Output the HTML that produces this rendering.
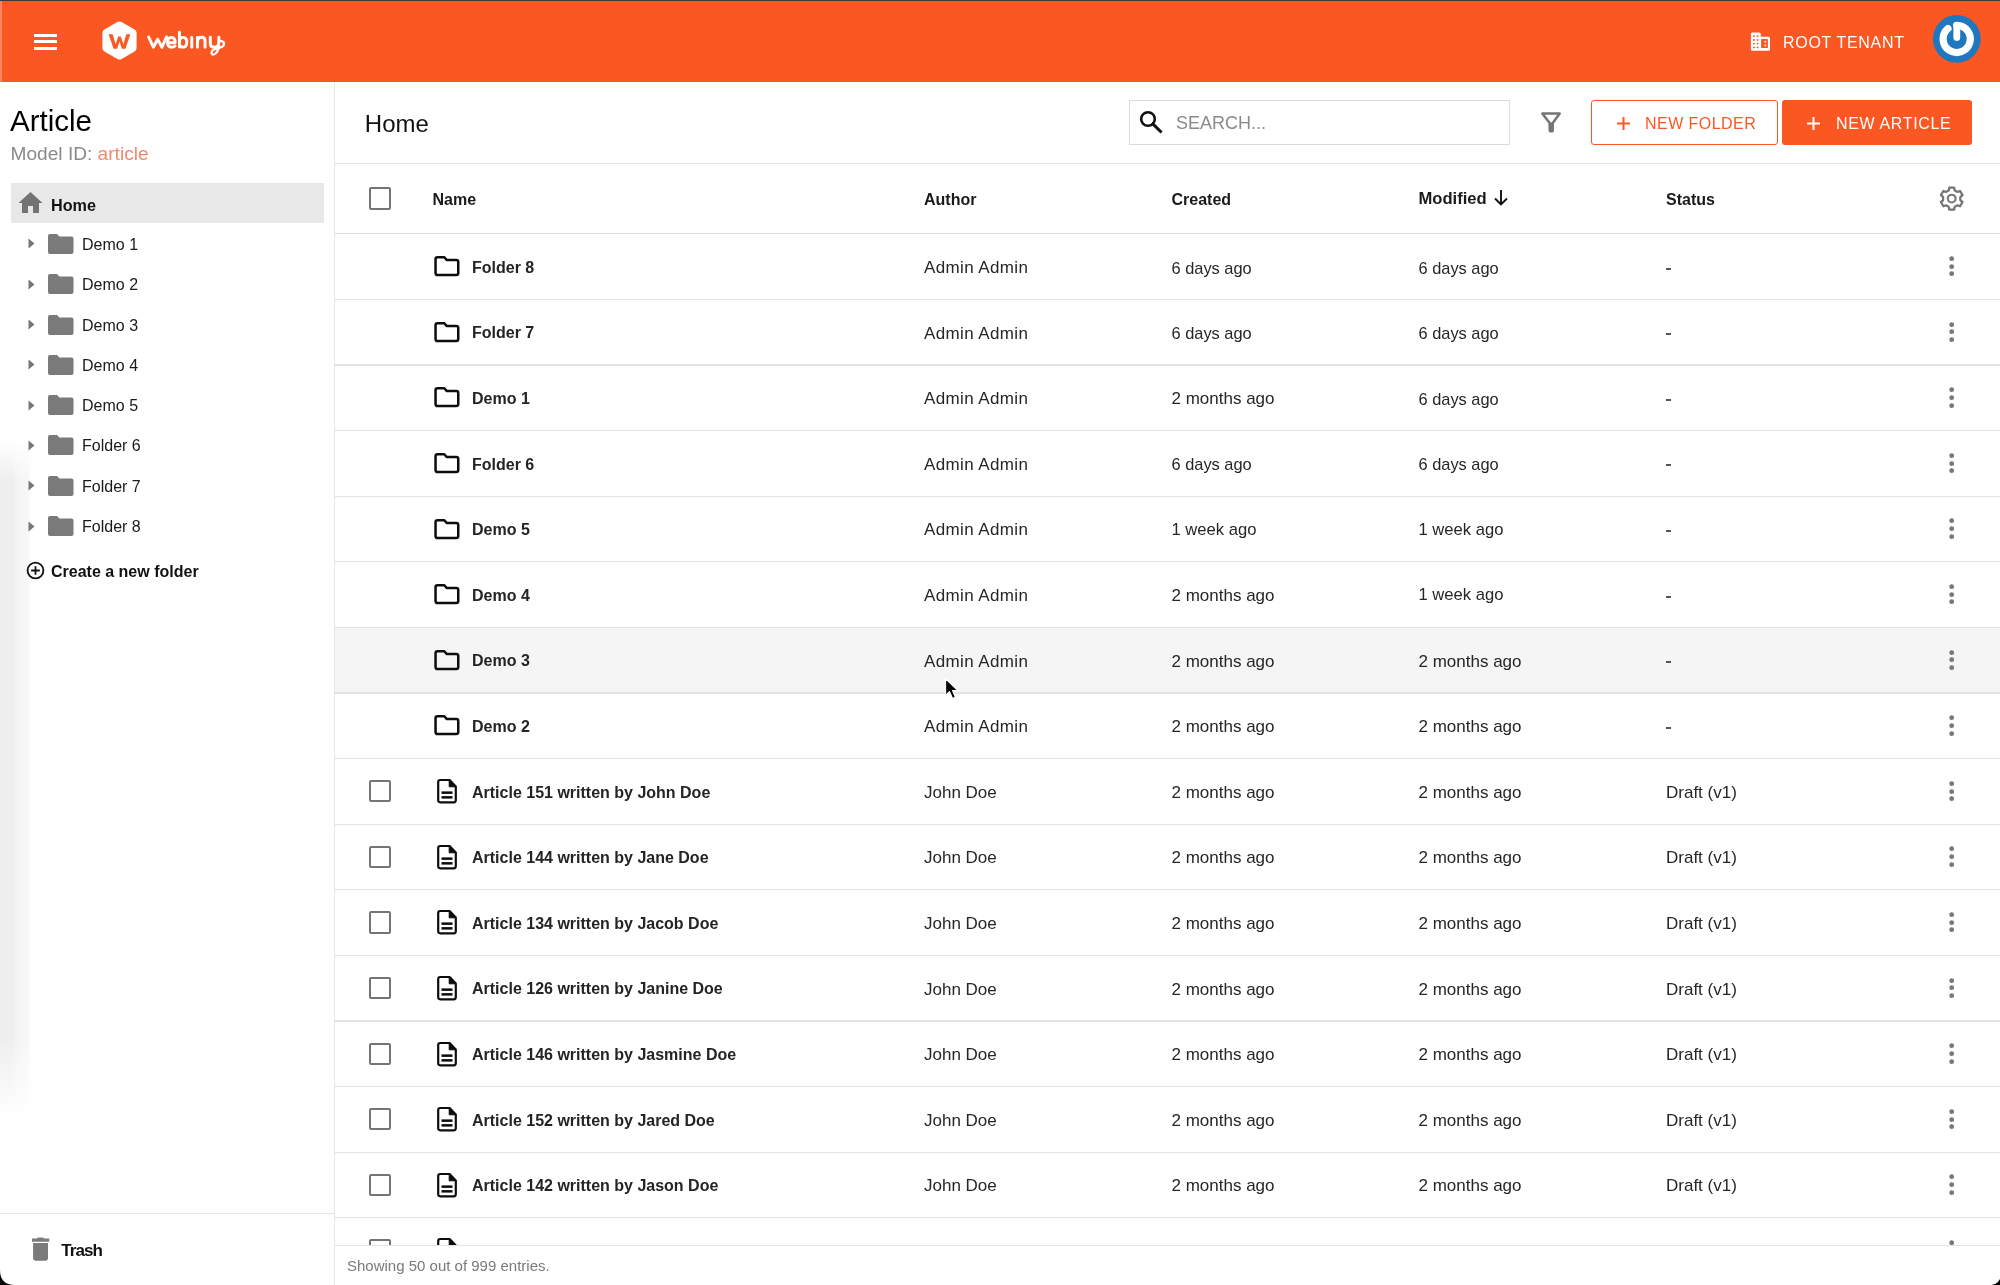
<!DOCTYPE html>
<html><head><meta charset="utf-8"><style>
html,body{margin:0;padding:0;background:#fff;}
body{width:2000px;height:1285px;position:relative;overflow:hidden;font-family:"Liberation Sans", sans-serif;}
.t{position:absolute;white-space:nowrap;}
#wrap{position:absolute;left:0;top:0;width:2000px;height:1285px;will-change:transform;}
.r{position:absolute;}
svg.r{overflow:visible;}
</style></head><body><div id="wrap">
<div class="r" style="left:0.00px;top:0.00px;width:2000.00px;height:1.20px;background:#3d3a38;"></div>
<div class="r" style="left:0.00px;top:1.20px;width:2000.00px;height:80.50px;background:#fa5723;"></div>
<div class="r" style="left:0.00px;top:1.20px;width:1.60px;height:80.50px;background:rgba(255,255,255,0.28);"></div>
<div class="r" style="left:34.00px;top:34.00px;width:23.00px;height:3.00px;background:#fff;"></div>
<div class="r" style="left:34.00px;top:40.20px;width:23.00px;height:3.00px;background:#fff;"></div>
<div class="r" style="left:34.00px;top:46.50px;width:23.00px;height:3.00px;background:#fff;"></div>
<svg class="r" style="left:101.00px;top:20.00px;" width="37" height="41" viewBox="0 0 37 41"><path d="M18.5 1.5 Q19.6 1.5 20.6 2.1 L33.6 9.6 Q35.6 10.8 35.6 13.1 L35.6 27.9 Q35.6 30.2 33.6 31.4 L20.6 38.9 Q18.5 40.1 16.4 38.9 L3.4 31.4 Q1.4 30.2 1.4 27.9 L1.4 13.1 Q1.4 10.8 3.4 9.6 L16.4 2.1 Q17.4 1.5 18.5 1.5Z" fill="#fff"/><path d="M7.6 14.2 L11.7 14.2 L14.6 24.2 L17.2 16.6 L19.8 16.6 L22.4 24.2 L25.3 14.2 L29.4 14.2 L24.4 28.8 L20.9 28.8 L18.5 21.6 L16.1 28.8 L12.6 28.8 Z" fill="#fa5723"/></svg>
<svg class="r" style="left:140.00px;top:25.00px;" width="95" height="37" viewBox="0 0 2000 779"><g stroke="#fff" fill="none" stroke-width="62" stroke-linecap="round" stroke-linejoin="round"><path d="M180 252 L282 468 L372 300 L462 468 L558 252"/><path d="M595 372 L740 372 Q740 262 662 262 Q580 262 580 365 Q580 470 665 470 Q712 470 738 442"/><path d="M830 150 L830 465 M830 365 Q830 260 905 260 Q985 260 985 365 Q985 470 905 470 Q830 470 830 365"/><path d="M1090 262 L1090 468"/><path d="M1210 468 L1210 262 M1210 340 Q1215 258 1295 258 Q1370 258 1370 340 L1370 468"/><path d="M1480 255 L1480 390 Q1480 470 1565 470 Q1650 470 1660 390 L1660 255"/></g><path d="M1660 400 L1660 450 Q1655 540 1590 600 Q1520 655 1505 590 Q1500 520 1640 490 Q1760 465 1770 405 Q1775 350 1705 335" stroke="#fff" fill="none" stroke-width="46" stroke-linecap="round" stroke-linejoin="round"/></svg>
<svg class="r" style="left:1750.00px;top:32.00px;" width="21" height="20" viewBox="0 0 21 20"><path d="M2.4 0.6 H9.2 Q10.7 0.6 10.7 2.1 V4.7 H18.5 Q20 4.7 20 6.2 V17.2 Q20 18.7 18.5 18.7 H2.4 Q0.9 18.7 0.9 17.2 V2.1 Q0.9 0.6 2.4 0.6Z" fill="#fff"/><circle cx="3.9" cy="4.1" r="0.95" fill="#fa5723"/><circle cx="3.9" cy="7.9" r="0.95" fill="#fa5723"/><circle cx="3.9" cy="11.6" r="0.95" fill="#fa5723"/><circle cx="3.9" cy="15.4" r="0.95" fill="#fa5723"/><circle cx="7.6" cy="4.1" r="0.95" fill="#fa5723"/><circle cx="7.6" cy="7.9" r="0.95" fill="#fa5723"/><circle cx="7.6" cy="11.6" r="0.95" fill="#fa5723"/><circle cx="7.6" cy="15.4" r="0.95" fill="#fa5723"/><rect x="11.1" y="7.1" width="6.8" height="8.9" rx="0.6" fill="#fa5723"/><circle cx="15.3" cy="9.7" r="0.95" fill="#fff"/><circle cx="15.3" cy="13.4" r="0.95" fill="#fff"/></svg>
<div class="t" style="left:1783.00px;top:34.96px;font-size:16px;line-height:16px;color:#fff;font-weight:normal;letter-spacing:0.69px;">ROOT TENANT</div>
<svg class="r" style="left:1932.00px;top:14.00px;" width="49" height="49" viewBox="0 0 49 49"><circle cx="24.8" cy="24.95" r="23.9" fill="#1f77bf"/><path d="M24.7 11.3 A13.6 13.6 0 1 1 15.96 14.48" stroke="#fff" stroke-width="7.2" fill="none" stroke-linecap="round"/><path d="M24.8 11.4 L24.8 23.4" stroke="#fff" stroke-width="6.8" stroke-linecap="round"/></svg>
<div class="r" style="left:0.00px;top:440.00px;width:32.00px;height:680.00px;background:linear-gradient(90deg, #eeeeee 0, #efefef 40%, #f4f4f4 52%, #f7f7f7 85%, rgba(255,255,255,0) 100%);-webkit-mask-image:linear-gradient(180deg, transparent 0, #000 6%, #000 88%, transparent 100%);"></div>
<div class="r" style="left:334.00px;top:81.50px;width:1.00px;height:1204.00px;background:#e6e6e6;"></div>
<div class="t" style="left:10.00px;top:106.13px;font-size:29.5px;line-height:29.5px;color:#000;font-weight:normal;letter-spacing:0px;">Article</div>
<div class="t" style="left:10.60px;top:144.43px;font-size:19.1px;line-height:19.1px;color:#8a8a8a;font-weight:normal;letter-spacing:0px;">Model ID: <span style="color:#ee8b70">article</span></div>
<div class="r" style="left:10.50px;top:183.30px;width:313.20px;height:39.70px;background:#e8e8e8;"></div>
<svg class="r" style="left:18.00px;top:191.00px;" width="25" height="23" viewBox="0 0 25 23"><path d="M12.5 1 L24.5 12 L21 12 L21 22 L15 22 L15 15 L10 15 L10 22 L4 22 L4 12 L0.5 12 Z" fill="#737373"/></svg>
<div class="t" style="left:51.00px;top:196.59px;font-size:16.2px;line-height:16.2px;color:#111;font-weight:bold;letter-spacing:0px;">Home</div>
<svg class="r" style="left:27.50px;top:238.40px;" width="8" height="11" viewBox="0 0 8 11"><path d="M0.5 0.5 L6.5 5.5 L0.5 10.5Z" fill="#777"/></svg>
<svg class="r" style="left:48.00px;top:233.90px;" width="25.5" height="20" viewBox="0 0 25.5 20"><path d="M2 0 L9 0 L11.5 2.5 L23.5 2.5 Q25.5 2.5 25.5 4.5 L25.5 18 Q25.5 20 23.5 20 L2 20 Q0 20 0 18 L0 2 Q0 0 2 0Z" fill="#7a7a7a"/></svg>
<div class="t" style="left:82.00px;top:236.96px;font-size:16px;line-height:16px;color:#1a1a1a;font-weight:normal;letter-spacing:0px;">Demo 1</div>
<svg class="r" style="left:27.50px;top:278.70px;" width="8" height="11" viewBox="0 0 8 11"><path d="M0.5 0.5 L6.5 5.5 L0.5 10.5Z" fill="#777"/></svg>
<svg class="r" style="left:48.00px;top:274.20px;" width="25.5" height="20" viewBox="0 0 25.5 20"><path d="M2 0 L9 0 L11.5 2.5 L23.5 2.5 Q25.5 2.5 25.5 4.5 L25.5 18 Q25.5 20 23.5 20 L2 20 Q0 20 0 18 L0 2 Q0 0 2 0Z" fill="#7a7a7a"/></svg>
<div class="t" style="left:82.00px;top:277.26px;font-size:16px;line-height:16px;color:#1a1a1a;font-weight:normal;letter-spacing:0px;">Demo 2</div>
<svg class="r" style="left:27.50px;top:319.00px;" width="8" height="11" viewBox="0 0 8 11"><path d="M0.5 0.5 L6.5 5.5 L0.5 10.5Z" fill="#777"/></svg>
<svg class="r" style="left:48.00px;top:314.50px;" width="25.5" height="20" viewBox="0 0 25.5 20"><path d="M2 0 L9 0 L11.5 2.5 L23.5 2.5 Q25.5 2.5 25.5 4.5 L25.5 18 Q25.5 20 23.5 20 L2 20 Q0 20 0 18 L0 2 Q0 0 2 0Z" fill="#7a7a7a"/></svg>
<div class="t" style="left:82.00px;top:317.56px;font-size:16px;line-height:16px;color:#1a1a1a;font-weight:normal;letter-spacing:0px;">Demo 3</div>
<svg class="r" style="left:27.50px;top:359.30px;" width="8" height="11" viewBox="0 0 8 11"><path d="M0.5 0.5 L6.5 5.5 L0.5 10.5Z" fill="#777"/></svg>
<svg class="r" style="left:48.00px;top:354.80px;" width="25.5" height="20" viewBox="0 0 25.5 20"><path d="M2 0 L9 0 L11.5 2.5 L23.5 2.5 Q25.5 2.5 25.5 4.5 L25.5 18 Q25.5 20 23.5 20 L2 20 Q0 20 0 18 L0 2 Q0 0 2 0Z" fill="#7a7a7a"/></svg>
<div class="t" style="left:82.00px;top:357.86px;font-size:16px;line-height:16px;color:#1a1a1a;font-weight:normal;letter-spacing:0px;">Demo 4</div>
<svg class="r" style="left:27.50px;top:399.60px;" width="8" height="11" viewBox="0 0 8 11"><path d="M0.5 0.5 L6.5 5.5 L0.5 10.5Z" fill="#777"/></svg>
<svg class="r" style="left:48.00px;top:395.10px;" width="25.5" height="20" viewBox="0 0 25.5 20"><path d="M2 0 L9 0 L11.5 2.5 L23.5 2.5 Q25.5 2.5 25.5 4.5 L25.5 18 Q25.5 20 23.5 20 L2 20 Q0 20 0 18 L0 2 Q0 0 2 0Z" fill="#7a7a7a"/></svg>
<div class="t" style="left:82.00px;top:398.16px;font-size:16px;line-height:16px;color:#1a1a1a;font-weight:normal;letter-spacing:0px;">Demo 5</div>
<svg class="r" style="left:27.50px;top:439.90px;" width="8" height="11" viewBox="0 0 8 11"><path d="M0.5 0.5 L6.5 5.5 L0.5 10.5Z" fill="#777"/></svg>
<svg class="r" style="left:48.00px;top:435.40px;" width="25.5" height="20" viewBox="0 0 25.5 20"><path d="M2 0 L9 0 L11.5 2.5 L23.5 2.5 Q25.5 2.5 25.5 4.5 L25.5 18 Q25.5 20 23.5 20 L2 20 Q0 20 0 18 L0 2 Q0 0 2 0Z" fill="#7a7a7a"/></svg>
<div class="t" style="left:82.00px;top:438.46px;font-size:16px;line-height:16px;color:#1a1a1a;font-weight:normal;letter-spacing:0px;">Folder 6</div>
<svg class="r" style="left:27.50px;top:480.20px;" width="8" height="11" viewBox="0 0 8 11"><path d="M0.5 0.5 L6.5 5.5 L0.5 10.5Z" fill="#777"/></svg>
<svg class="r" style="left:48.00px;top:475.70px;" width="25.5" height="20" viewBox="0 0 25.5 20"><path d="M2 0 L9 0 L11.5 2.5 L23.5 2.5 Q25.5 2.5 25.5 4.5 L25.5 18 Q25.5 20 23.5 20 L2 20 Q0 20 0 18 L0 2 Q0 0 2 0Z" fill="#7a7a7a"/></svg>
<div class="t" style="left:82.00px;top:478.76px;font-size:16px;line-height:16px;color:#1a1a1a;font-weight:normal;letter-spacing:0px;">Folder 7</div>
<svg class="r" style="left:27.50px;top:520.50px;" width="8" height="11" viewBox="0 0 8 11"><path d="M0.5 0.5 L6.5 5.5 L0.5 10.5Z" fill="#777"/></svg>
<svg class="r" style="left:48.00px;top:516.00px;" width="25.5" height="20" viewBox="0 0 25.5 20"><path d="M2 0 L9 0 L11.5 2.5 L23.5 2.5 Q25.5 2.5 25.5 4.5 L25.5 18 Q25.5 20 23.5 20 L2 20 Q0 20 0 18 L0 2 Q0 0 2 0Z" fill="#7a7a7a"/></svg>
<div class="t" style="left:82.00px;top:519.06px;font-size:16px;line-height:16px;color:#1a1a1a;font-weight:normal;letter-spacing:0px;">Folder 8</div>
<svg class="r" style="left:26.00px;top:561.00px;" width="19" height="19" viewBox="0 0 19 19"><circle cx="9.5" cy="9.5" r="7.9" stroke="#111" stroke-width="1.8" fill="none"/><path d="M9.5 5.2 V13.8 M5.2 9.5 H13.8" stroke="#111" stroke-width="1.8"/></svg>
<div class="t" style="left:51.00px;top:563.56px;font-size:16px;line-height:16px;color:#111;font-weight:bold;letter-spacing:0px;">Create a new folder</div>
<div class="r" style="left:0.00px;top:1213.00px;width:334.00px;height:1.00px;background:#e6e6e6;"></div>
<svg class="r" style="left:31.00px;top:1237.00px;" width="19" height="24" viewBox="0 0 19 24"><path d="M6.3 1.1 Q6.5 0.4 7.3 0.4 H11.7 Q12.5 0.4 12.7 1.1 L13 1.6 H18.2 V4.8 H1 V1.6 H6Z" fill="#7a7a7a"/><path d="M2.1 6 H17 V21.3 Q17 23.7 14.6 23.7 H4.5 Q2.1 23.7 2.1 21.3Z" fill="#7a7a7a"/></svg>
<div class="t" style="left:61.20px;top:1242.21px;font-size:17px;line-height:17px;color:#111;font-weight:bold;letter-spacing:-0.9px;">Trash</div>
<div class="t" style="left:364.80px;top:111.68px;font-size:24px;line-height:24px;color:#111;font-weight:normal;letter-spacing:0px;">Home</div>
<div class="r" style="left:1129.00px;top:100.00px;width:381.00px;height:45.00px;background:#fff;border:1px solid #dcdcdc;box-sizing:border-box;"></div>
<svg class="r" style="left:1137.50px;top:109.30px;" width="26" height="26" viewBox="0 0 26 26"><circle cx="10" cy="10" r="6.8" stroke="#111" stroke-width="2.6" fill="none"/><path d="M15 15 L22.5 22.5" stroke="#111" stroke-width="3" stroke-linecap="square"/></svg>
<div class="t" style="left:1176.00px;top:113.96px;font-size:18px;line-height:18px;color:#8a8a8a;font-weight:normal;letter-spacing:0px;">SEARCH...</div>
<svg class="r" style="left:1539.00px;top:111.00px;" width="24" height="23" viewBox="0 0 24 23"><path d="M3.3 2.6 H20.7 L13.6 12.3 V19.5 H10.8 V12.3Z" stroke="#757575" stroke-width="2.5" fill="none" stroke-linejoin="round"/><rect x="9.8" y="11.5" width="4.9" height="10" rx="1.6" fill="#757575"/></svg>
<div class="r" style="left:1591.30px;top:99.80px;width:186.50px;height:45.10px;background:transparent;border:1.6px solid #fa5723;box-sizing:border-box;border-radius:3px;"></div>
<svg class="r" style="left:1615.50px;top:116.00px;" width="15" height="15" viewBox="0 0 15 15"><path d="M7.5 1 V14 M1 7.5 H14" stroke="#fa5723" stroke-width="2"/></svg>
<div class="t" style="left:1645.00px;top:116.06px;font-size:16px;line-height:16px;color:#fa5723;font-weight:normal;letter-spacing:0.45px;">NEW FOLDER</div>
<div class="r" style="left:1782.00px;top:99.80px;width:190.00px;height:45.10px;background:#fa5723;border-radius:3px;"></div>
<svg class="r" style="left:1806.00px;top:116.00px;" width="15" height="15" viewBox="0 0 15 15"><path d="M7.5 1 V14 M1 7.5 H14" stroke="#fff" stroke-width="2"/></svg>
<div class="t" style="left:1836.00px;top:116.06px;font-size:16px;line-height:16px;color:#fff;font-weight:normal;letter-spacing:0.66px;">NEW ARTICLE</div>
<div class="r" style="left:334.50px;top:163.00px;width:1665.50px;height:1.00px;background:#e3e3e3;"></div>
<div class="r" style="left:369.20px;top:187.30px;width:22.00px;height:22.30px;background:transparent;border:2.2px solid #757575;border-radius:2px;box-sizing:border-box;"></div>
<div class="t" style="left:432.50px;top:191.56px;font-size:16px;line-height:16px;color:#1a1a1a;font-weight:bold;letter-spacing:0px;">Name</div>
<div class="t" style="left:924.00px;top:191.56px;font-size:16px;line-height:16px;color:#1a1a1a;font-weight:bold;letter-spacing:0px;">Author</div>
<div class="t" style="left:1171.50px;top:191.56px;font-size:16px;line-height:16px;color:#1a1a1a;font-weight:bold;letter-spacing:0px;">Created</div>
<div class="t" style="left:1418.50px;top:191.05px;font-size:16.6px;line-height:16.6px;color:#1a1a1a;font-weight:bold;letter-spacing:0px;">Modified</div>
<svg class="r" style="left:1493.00px;top:189.00px;" width="16" height="17" viewBox="0 0 16 17"><path d="M8 1 V15.5 M2 9.5 L8 15.5 L14 9.5" stroke="#111" stroke-width="1.9" fill="none"/></svg>
<div class="t" style="left:1666.00px;top:191.56px;font-size:16px;line-height:16px;color:#1a1a1a;font-weight:bold;letter-spacing:0px;">Status</div>
<svg class="r" style="left:1939.00px;top:185.60px;" width="26" height="26" viewBox="0 0 26 26"><path d="M9.80 4.18 L10.25 1.57 L15.15 1.57 L15.60 4.18 L16.27 4.77 L17.00 5.15 L17.69 5.60 L18.54 5.88 L21.03 4.97 L23.48 9.20 L21.44 10.90 L21.26 11.78 L21.30 12.60 L21.26 13.42 L21.44 14.30 L23.48 16.00 L21.03 20.23 L18.54 19.32 L17.69 19.60 L17.00 20.05 L16.27 20.43 L15.60 21.02 L15.15 23.63 L10.25 23.63 L9.80 21.02 L9.13 20.43 L8.40 20.05 L7.71 19.60 L6.86 19.32 L4.37 20.23 L1.92 16.00 L3.96 14.30 L4.14 13.42 L4.10 12.60 L4.14 11.78 L3.96 10.90 L1.92 9.20 L4.37 4.97 L6.86 5.88 L7.71 5.60 L8.40 5.15 L9.13 4.77Z" stroke="#757575" stroke-width="2.3" fill="none" stroke-linejoin="round"/><circle cx="12.7" cy="12.6" r="3.9" stroke="#757575" stroke-width="2.1" fill="none"/></svg>
<div class="r" style="left:334.50px;top:233.30px;width:1665.50px;height:1.20px;background:#e0e0e0;"></div>
<div class="r" style="left:335px;top:234px;width:1665px;height:1011px;overflow:hidden">
<svg class="r" style="left:98.00px;top:21.10px;" width="28" height="23" viewBox="0 0 28 23"><path d="M4.5 2.25 H11.3 L13.6 4.9 H23.25 Q25.25 4.9 25.25 6.9 V18.05 Q25.25 20.05 23.25 20.05 H4.55 Q2.55 20.05 2.55 18.05 V4.25 Q2.55 2.25 4.5 2.25Z" stroke="#0d0d0d" stroke-width="2.5" fill="none" stroke-linejoin="round"/></svg>
<div class="t" style="left:137.00px;top:25.86px;font-size:16px;line-height:16px;color:#242424;font-weight:bold;letter-spacing:0px;">Folder 8</div>
<div class="t" style="left:589.00px;top:25.01px;font-size:17px;line-height:17px;color:#262626;font-weight:normal;letter-spacing:0.38px;">Admin Admin</div>
<div class="t" style="left:836.50px;top:25.52px;font-size:16.4px;line-height:16.4px;color:#262626;font-weight:normal;letter-spacing:0px;">6 days ago</div>
<div class="t" style="left:1083.50px;top:25.52px;font-size:16.4px;line-height:16.4px;color:#262626;font-weight:normal;letter-spacing:0px;">6 days ago</div>
<div class="r" style="left:1331.00px;top:34.00px;width:4.80px;height:1.70px;background:#555;"></div>
<svg class="r" style="left:1614.00px;top:21.90px;" width="5.4" height="5.4" viewBox="0 0 6 6"><circle cx="3" cy="3" r="2.7" fill="#777"/></svg>
<svg class="r" style="left:1614.00px;top:29.70px;" width="5.4" height="5.4" viewBox="0 0 6 6"><circle cx="3" cy="3" r="2.7" fill="#777"/></svg>
<svg class="r" style="left:1614.00px;top:37.40px;" width="5.4" height="5.4" viewBox="0 0 6 6"><circle cx="3" cy="3" r="2.7" fill="#777"/></svg>
<div class="r" style="left:-0.50px;top:64.80px;width:1665.50px;height:1.20px;background:#e2e2e2;"></div>
<svg class="r" style="left:98.00px;top:86.70px;" width="28" height="23" viewBox="0 0 28 23"><path d="M4.5 2.25 H11.3 L13.6 4.9 H23.25 Q25.25 4.9 25.25 6.9 V18.05 Q25.25 20.05 23.25 20.05 H4.55 Q2.55 20.05 2.55 18.05 V4.25 Q2.55 2.25 4.5 2.25Z" stroke="#0d0d0d" stroke-width="2.5" fill="none" stroke-linejoin="round"/></svg>
<div class="t" style="left:137.00px;top:91.46px;font-size:16px;line-height:16px;color:#242424;font-weight:bold;letter-spacing:0px;">Folder 7</div>
<div class="t" style="left:589.00px;top:90.61px;font-size:17px;line-height:17px;color:#262626;font-weight:normal;letter-spacing:0.38px;">Admin Admin</div>
<div class="t" style="left:836.50px;top:91.12px;font-size:16.4px;line-height:16.4px;color:#262626;font-weight:normal;letter-spacing:0px;">6 days ago</div>
<div class="t" style="left:1083.50px;top:91.12px;font-size:16.4px;line-height:16.4px;color:#262626;font-weight:normal;letter-spacing:0px;">6 days ago</div>
<div class="r" style="left:1331.00px;top:99.00px;width:4.80px;height:1.70px;background:#555;"></div>
<svg class="r" style="left:1614.00px;top:87.50px;" width="5.4" height="5.4" viewBox="0 0 6 6"><circle cx="3" cy="3" r="2.7" fill="#777"/></svg>
<svg class="r" style="left:1614.00px;top:95.30px;" width="5.4" height="5.4" viewBox="0 0 6 6"><circle cx="3" cy="3" r="2.7" fill="#777"/></svg>
<svg class="r" style="left:1614.00px;top:103.00px;" width="5.4" height="5.4" viewBox="0 0 6 6"><circle cx="3" cy="3" r="2.7" fill="#777"/></svg>
<div class="r" style="left:-0.50px;top:130.40px;width:1665.50px;height:1.20px;background:#e2e2e2;"></div>
<svg class="r" style="left:98.00px;top:152.30px;" width="28" height="23" viewBox="0 0 28 23"><path d="M4.5 2.25 H11.3 L13.6 4.9 H23.25 Q25.25 4.9 25.25 6.9 V18.05 Q25.25 20.05 23.25 20.05 H4.55 Q2.55 20.05 2.55 18.05 V4.25 Q2.55 2.25 4.5 2.25Z" stroke="#0d0d0d" stroke-width="2.5" fill="none" stroke-linejoin="round"/></svg>
<div class="t" style="left:137.00px;top:157.06px;font-size:16px;line-height:16px;color:#242424;font-weight:bold;letter-spacing:0px;">Demo 1</div>
<div class="t" style="left:589.00px;top:156.21px;font-size:17px;line-height:17px;color:#262626;font-weight:normal;letter-spacing:0.38px;">Admin Admin</div>
<div class="t" style="left:836.50px;top:156.21px;font-size:17px;line-height:17px;color:#262626;font-weight:normal;letter-spacing:0px;">2 months ago</div>
<div class="t" style="left:1083.50px;top:156.72px;font-size:16.4px;line-height:16.4px;color:#262626;font-weight:normal;letter-spacing:0px;">6 days ago</div>
<div class="r" style="left:1331.00px;top:165.00px;width:4.80px;height:1.70px;background:#555;"></div>
<svg class="r" style="left:1614.00px;top:153.10px;" width="5.4" height="5.4" viewBox="0 0 6 6"><circle cx="3" cy="3" r="2.7" fill="#777"/></svg>
<svg class="r" style="left:1614.00px;top:160.90px;" width="5.4" height="5.4" viewBox="0 0 6 6"><circle cx="3" cy="3" r="2.7" fill="#777"/></svg>
<svg class="r" style="left:1614.00px;top:168.60px;" width="5.4" height="5.4" viewBox="0 0 6 6"><circle cx="3" cy="3" r="2.7" fill="#777"/></svg>
<div class="r" style="left:-0.50px;top:196.00px;width:1665.50px;height:1.20px;background:#e2e2e2;"></div>
<svg class="r" style="left:98.00px;top:217.90px;" width="28" height="23" viewBox="0 0 28 23"><path d="M4.5 2.25 H11.3 L13.6 4.9 H23.25 Q25.25 4.9 25.25 6.9 V18.05 Q25.25 20.05 23.25 20.05 H4.55 Q2.55 20.05 2.55 18.05 V4.25 Q2.55 2.25 4.5 2.25Z" stroke="#0d0d0d" stroke-width="2.5" fill="none" stroke-linejoin="round"/></svg>
<div class="t" style="left:137.00px;top:222.66px;font-size:16px;line-height:16px;color:#242424;font-weight:bold;letter-spacing:0px;">Folder 6</div>
<div class="t" style="left:589.00px;top:221.81px;font-size:17px;line-height:17px;color:#262626;font-weight:normal;letter-spacing:0.38px;">Admin Admin</div>
<div class="t" style="left:836.50px;top:222.32px;font-size:16.4px;line-height:16.4px;color:#262626;font-weight:normal;letter-spacing:0px;">6 days ago</div>
<div class="t" style="left:1083.50px;top:222.32px;font-size:16.4px;line-height:16.4px;color:#262626;font-weight:normal;letter-spacing:0px;">6 days ago</div>
<div class="r" style="left:1331.00px;top:230.00px;width:4.80px;height:1.70px;background:#555;"></div>
<svg class="r" style="left:1614.00px;top:218.70px;" width="5.4" height="5.4" viewBox="0 0 6 6"><circle cx="3" cy="3" r="2.7" fill="#777"/></svg>
<svg class="r" style="left:1614.00px;top:226.50px;" width="5.4" height="5.4" viewBox="0 0 6 6"><circle cx="3" cy="3" r="2.7" fill="#777"/></svg>
<svg class="r" style="left:1614.00px;top:234.20px;" width="5.4" height="5.4" viewBox="0 0 6 6"><circle cx="3" cy="3" r="2.7" fill="#777"/></svg>
<div class="r" style="left:-0.50px;top:261.60px;width:1665.50px;height:1.20px;background:#e2e2e2;"></div>
<svg class="r" style="left:98.00px;top:283.50px;" width="28" height="23" viewBox="0 0 28 23"><path d="M4.5 2.25 H11.3 L13.6 4.9 H23.25 Q25.25 4.9 25.25 6.9 V18.05 Q25.25 20.05 23.25 20.05 H4.55 Q2.55 20.05 2.55 18.05 V4.25 Q2.55 2.25 4.5 2.25Z" stroke="#0d0d0d" stroke-width="2.5" fill="none" stroke-linejoin="round"/></svg>
<div class="t" style="left:137.00px;top:288.26px;font-size:16px;line-height:16px;color:#242424;font-weight:bold;letter-spacing:0px;">Demo 5</div>
<div class="t" style="left:589.00px;top:287.41px;font-size:17px;line-height:17px;color:#262626;font-weight:normal;letter-spacing:0.38px;">Admin Admin</div>
<div class="t" style="left:836.50px;top:287.75px;font-size:16.6px;line-height:16.6px;color:#262626;font-weight:normal;letter-spacing:0px;">1 week ago</div>
<div class="t" style="left:1083.50px;top:287.75px;font-size:16.6px;line-height:16.6px;color:#262626;font-weight:normal;letter-spacing:0px;">1 week ago</div>
<div class="r" style="left:1331.00px;top:296.00px;width:4.80px;height:1.70px;background:#555;"></div>
<svg class="r" style="left:1614.00px;top:284.30px;" width="5.4" height="5.4" viewBox="0 0 6 6"><circle cx="3" cy="3" r="2.7" fill="#777"/></svg>
<svg class="r" style="left:1614.00px;top:292.10px;" width="5.4" height="5.4" viewBox="0 0 6 6"><circle cx="3" cy="3" r="2.7" fill="#777"/></svg>
<svg class="r" style="left:1614.00px;top:299.80px;" width="5.4" height="5.4" viewBox="0 0 6 6"><circle cx="3" cy="3" r="2.7" fill="#777"/></svg>
<div class="r" style="left:-0.50px;top:327.20px;width:1665.50px;height:1.20px;background:#e2e2e2;"></div>
<svg class="r" style="left:98.00px;top:349.10px;" width="28" height="23" viewBox="0 0 28 23"><path d="M4.5 2.25 H11.3 L13.6 4.9 H23.25 Q25.25 4.9 25.25 6.9 V18.05 Q25.25 20.05 23.25 20.05 H4.55 Q2.55 20.05 2.55 18.05 V4.25 Q2.55 2.25 4.5 2.25Z" stroke="#0d0d0d" stroke-width="2.5" fill="none" stroke-linejoin="round"/></svg>
<div class="t" style="left:137.00px;top:353.86px;font-size:16px;line-height:16px;color:#242424;font-weight:bold;letter-spacing:0px;">Demo 4</div>
<div class="t" style="left:589.00px;top:353.01px;font-size:17px;line-height:17px;color:#262626;font-weight:normal;letter-spacing:0.38px;">Admin Admin</div>
<div class="t" style="left:836.50px;top:353.01px;font-size:17px;line-height:17px;color:#262626;font-weight:normal;letter-spacing:0px;">2 months ago</div>
<div class="t" style="left:1083.50px;top:353.35px;font-size:16.6px;line-height:16.6px;color:#262626;font-weight:normal;letter-spacing:0px;">1 week ago</div>
<div class="r" style="left:1331.00px;top:362.00px;width:4.80px;height:1.70px;background:#555;"></div>
<svg class="r" style="left:1614.00px;top:349.90px;" width="5.4" height="5.4" viewBox="0 0 6 6"><circle cx="3" cy="3" r="2.7" fill="#777"/></svg>
<svg class="r" style="left:1614.00px;top:357.70px;" width="5.4" height="5.4" viewBox="0 0 6 6"><circle cx="3" cy="3" r="2.7" fill="#777"/></svg>
<svg class="r" style="left:1614.00px;top:365.40px;" width="5.4" height="5.4" viewBox="0 0 6 6"><circle cx="3" cy="3" r="2.7" fill="#777"/></svg>
<div class="r" style="left:-0.50px;top:392.80px;width:1665.50px;height:1.20px;background:#e2e2e2;"></div>
<div class="r" style="left:-0.50px;top:393.80px;width:1665.50px;height:65.00px;background:#f5f5f5;"></div>
<svg class="r" style="left:98.00px;top:414.70px;" width="28" height="23" viewBox="0 0 28 23"><path d="M4.5 2.25 H11.3 L13.6 4.9 H23.25 Q25.25 4.9 25.25 6.9 V18.05 Q25.25 20.05 23.25 20.05 H4.55 Q2.55 20.05 2.55 18.05 V4.25 Q2.55 2.25 4.5 2.25Z" stroke="#0d0d0d" stroke-width="2.5" fill="none" stroke-linejoin="round"/></svg>
<div class="t" style="left:137.00px;top:419.46px;font-size:16px;line-height:16px;color:#242424;font-weight:bold;letter-spacing:0px;">Demo 3</div>
<div class="t" style="left:589.00px;top:418.61px;font-size:17px;line-height:17px;color:#262626;font-weight:normal;letter-spacing:0.38px;">Admin Admin</div>
<div class="t" style="left:836.50px;top:418.61px;font-size:17px;line-height:17px;color:#262626;font-weight:normal;letter-spacing:0px;">2 months ago</div>
<div class="t" style="left:1083.50px;top:418.61px;font-size:17px;line-height:17px;color:#262626;font-weight:normal;letter-spacing:0px;">2 months ago</div>
<div class="r" style="left:1331.00px;top:427.00px;width:4.80px;height:1.70px;background:#555;"></div>
<svg class="r" style="left:1614.00px;top:415.50px;" width="5.4" height="5.4" viewBox="0 0 6 6"><circle cx="3" cy="3" r="2.7" fill="#777"/></svg>
<svg class="r" style="left:1614.00px;top:423.30px;" width="5.4" height="5.4" viewBox="0 0 6 6"><circle cx="3" cy="3" r="2.7" fill="#777"/></svg>
<svg class="r" style="left:1614.00px;top:431.00px;" width="5.4" height="5.4" viewBox="0 0 6 6"><circle cx="3" cy="3" r="2.7" fill="#777"/></svg>
<div class="r" style="left:-0.50px;top:458.40px;width:1665.50px;height:1.20px;background:#e2e2e2;"></div>
<svg class="r" style="left:98.00px;top:480.30px;" width="28" height="23" viewBox="0 0 28 23"><path d="M4.5 2.25 H11.3 L13.6 4.9 H23.25 Q25.25 4.9 25.25 6.9 V18.05 Q25.25 20.05 23.25 20.05 H4.55 Q2.55 20.05 2.55 18.05 V4.25 Q2.55 2.25 4.5 2.25Z" stroke="#0d0d0d" stroke-width="2.5" fill="none" stroke-linejoin="round"/></svg>
<div class="t" style="left:137.00px;top:485.06px;font-size:16px;line-height:16px;color:#242424;font-weight:bold;letter-spacing:0px;">Demo 2</div>
<div class="t" style="left:589.00px;top:484.21px;font-size:17px;line-height:17px;color:#262626;font-weight:normal;letter-spacing:0.38px;">Admin Admin</div>
<div class="t" style="left:836.50px;top:484.21px;font-size:17px;line-height:17px;color:#262626;font-weight:normal;letter-spacing:0px;">2 months ago</div>
<div class="t" style="left:1083.50px;top:484.21px;font-size:17px;line-height:17px;color:#262626;font-weight:normal;letter-spacing:0px;">2 months ago</div>
<div class="r" style="left:1331.00px;top:493.00px;width:4.80px;height:1.70px;background:#555;"></div>
<svg class="r" style="left:1614.00px;top:481.10px;" width="5.4" height="5.4" viewBox="0 0 6 6"><circle cx="3" cy="3" r="2.7" fill="#777"/></svg>
<svg class="r" style="left:1614.00px;top:488.90px;" width="5.4" height="5.4" viewBox="0 0 6 6"><circle cx="3" cy="3" r="2.7" fill="#777"/></svg>
<svg class="r" style="left:1614.00px;top:496.60px;" width="5.4" height="5.4" viewBox="0 0 6 6"><circle cx="3" cy="3" r="2.7" fill="#777"/></svg>
<div class="r" style="left:-0.50px;top:524.00px;width:1665.50px;height:1.20px;background:#e2e2e2;"></div>
<div class="r" style="left:34.20px;top:546.20px;width:22.00px;height:22.30px;background:transparent;border:2.2px solid #757575;border-radius:2px;box-sizing:border-box;"></div>
<svg class="r" style="left:101.00px;top:544.10px;" width="23" height="26" viewBox="0 0 23 26"><path d="M4.2 2.0 H13.6 L19.8 8.4 V22.3 Q19.8 24.3 17.8 24.3 H4.2 Q2.2 24.3 2.2 22.3 V4.0 Q2.2 2.0 4.2 2.0Z" stroke="#0d0d0d" stroke-width="2.2" fill="none" stroke-linejoin="round"/><path d="M13.2 2.0 V8.8 H19.8Z" fill="#0d0d0d" stroke="#0d0d0d" stroke-width="1" stroke-linejoin="round"/><rect x="5.5" y="13.4" width="11" height="2.5" fill="#0d0d0d"/><rect x="5.5" y="18.1" width="11" height="2.5" fill="#0d0d0d"/></svg>
<div class="t" style="left:137.00px;top:550.66px;font-size:16px;line-height:16px;color:#242424;font-weight:bold;letter-spacing:0px;">Article 151 written by John Doe</div>
<div class="t" style="left:589.00px;top:549.81px;font-size:17px;line-height:17px;color:#262626;font-weight:normal;letter-spacing:0px;">John Doe</div>
<div class="t" style="left:836.50px;top:549.81px;font-size:17px;line-height:17px;color:#262626;font-weight:normal;letter-spacing:0px;">2 months ago</div>
<div class="t" style="left:1083.50px;top:549.81px;font-size:17px;line-height:17px;color:#262626;font-weight:normal;letter-spacing:0px;">2 months ago</div>
<div class="t" style="left:1331.00px;top:549.81px;font-size:17px;line-height:17px;color:#262626;font-weight:normal;letter-spacing:0px;">Draft (v1)</div>
<svg class="r" style="left:1614.00px;top:546.70px;" width="5.4" height="5.4" viewBox="0 0 6 6"><circle cx="3" cy="3" r="2.7" fill="#777"/></svg>
<svg class="r" style="left:1614.00px;top:554.50px;" width="5.4" height="5.4" viewBox="0 0 6 6"><circle cx="3" cy="3" r="2.7" fill="#777"/></svg>
<svg class="r" style="left:1614.00px;top:562.20px;" width="5.4" height="5.4" viewBox="0 0 6 6"><circle cx="3" cy="3" r="2.7" fill="#777"/></svg>
<div class="r" style="left:-0.50px;top:589.60px;width:1665.50px;height:1.20px;background:#e2e2e2;"></div>
<div class="r" style="left:34.20px;top:611.80px;width:22.00px;height:22.30px;background:transparent;border:2.2px solid #757575;border-radius:2px;box-sizing:border-box;"></div>
<svg class="r" style="left:101.00px;top:609.70px;" width="23" height="26" viewBox="0 0 23 26"><path d="M4.2 2.0 H13.6 L19.8 8.4 V22.3 Q19.8 24.3 17.8 24.3 H4.2 Q2.2 24.3 2.2 22.3 V4.0 Q2.2 2.0 4.2 2.0Z" stroke="#0d0d0d" stroke-width="2.2" fill="none" stroke-linejoin="round"/><path d="M13.2 2.0 V8.8 H19.8Z" fill="#0d0d0d" stroke="#0d0d0d" stroke-width="1" stroke-linejoin="round"/><rect x="5.5" y="13.4" width="11" height="2.5" fill="#0d0d0d"/><rect x="5.5" y="18.1" width="11" height="2.5" fill="#0d0d0d"/></svg>
<div class="t" style="left:137.00px;top:616.26px;font-size:16px;line-height:16px;color:#242424;font-weight:bold;letter-spacing:0px;">Article 144 written by Jane Doe</div>
<div class="t" style="left:589.00px;top:615.41px;font-size:17px;line-height:17px;color:#262626;font-weight:normal;letter-spacing:0px;">John Doe</div>
<div class="t" style="left:836.50px;top:615.41px;font-size:17px;line-height:17px;color:#262626;font-weight:normal;letter-spacing:0px;">2 months ago</div>
<div class="t" style="left:1083.50px;top:615.41px;font-size:17px;line-height:17px;color:#262626;font-weight:normal;letter-spacing:0px;">2 months ago</div>
<div class="t" style="left:1331.00px;top:615.41px;font-size:17px;line-height:17px;color:#262626;font-weight:normal;letter-spacing:0px;">Draft (v1)</div>
<svg class="r" style="left:1614.00px;top:612.30px;" width="5.4" height="5.4" viewBox="0 0 6 6"><circle cx="3" cy="3" r="2.7" fill="#777"/></svg>
<svg class="r" style="left:1614.00px;top:620.10px;" width="5.4" height="5.4" viewBox="0 0 6 6"><circle cx="3" cy="3" r="2.7" fill="#777"/></svg>
<svg class="r" style="left:1614.00px;top:627.80px;" width="5.4" height="5.4" viewBox="0 0 6 6"><circle cx="3" cy="3" r="2.7" fill="#777"/></svg>
<div class="r" style="left:-0.50px;top:655.20px;width:1665.50px;height:1.20px;background:#e2e2e2;"></div>
<div class="r" style="left:34.20px;top:677.40px;width:22.00px;height:22.30px;background:transparent;border:2.2px solid #757575;border-radius:2px;box-sizing:border-box;"></div>
<svg class="r" style="left:101.00px;top:675.30px;" width="23" height="26" viewBox="0 0 23 26"><path d="M4.2 2.0 H13.6 L19.8 8.4 V22.3 Q19.8 24.3 17.8 24.3 H4.2 Q2.2 24.3 2.2 22.3 V4.0 Q2.2 2.0 4.2 2.0Z" stroke="#0d0d0d" stroke-width="2.2" fill="none" stroke-linejoin="round"/><path d="M13.2 2.0 V8.8 H19.8Z" fill="#0d0d0d" stroke="#0d0d0d" stroke-width="1" stroke-linejoin="round"/><rect x="5.5" y="13.4" width="11" height="2.5" fill="#0d0d0d"/><rect x="5.5" y="18.1" width="11" height="2.5" fill="#0d0d0d"/></svg>
<div class="t" style="left:137.00px;top:681.86px;font-size:16px;line-height:16px;color:#242424;font-weight:bold;letter-spacing:0px;">Article 134 written by Jacob Doe</div>
<div class="t" style="left:589.00px;top:681.01px;font-size:17px;line-height:17px;color:#262626;font-weight:normal;letter-spacing:0px;">John Doe</div>
<div class="t" style="left:836.50px;top:681.01px;font-size:17px;line-height:17px;color:#262626;font-weight:normal;letter-spacing:0px;">2 months ago</div>
<div class="t" style="left:1083.50px;top:681.01px;font-size:17px;line-height:17px;color:#262626;font-weight:normal;letter-spacing:0px;">2 months ago</div>
<div class="t" style="left:1331.00px;top:681.01px;font-size:17px;line-height:17px;color:#262626;font-weight:normal;letter-spacing:0px;">Draft (v1)</div>
<svg class="r" style="left:1614.00px;top:677.90px;" width="5.4" height="5.4" viewBox="0 0 6 6"><circle cx="3" cy="3" r="2.7" fill="#777"/></svg>
<svg class="r" style="left:1614.00px;top:685.70px;" width="5.4" height="5.4" viewBox="0 0 6 6"><circle cx="3" cy="3" r="2.7" fill="#777"/></svg>
<svg class="r" style="left:1614.00px;top:693.40px;" width="5.4" height="5.4" viewBox="0 0 6 6"><circle cx="3" cy="3" r="2.7" fill="#777"/></svg>
<div class="r" style="left:-0.50px;top:720.80px;width:1665.50px;height:1.20px;background:#e2e2e2;"></div>
<div class="r" style="left:34.20px;top:743.00px;width:22.00px;height:22.30px;background:transparent;border:2.2px solid #757575;border-radius:2px;box-sizing:border-box;"></div>
<svg class="r" style="left:101.00px;top:740.90px;" width="23" height="26" viewBox="0 0 23 26"><path d="M4.2 2.0 H13.6 L19.8 8.4 V22.3 Q19.8 24.3 17.8 24.3 H4.2 Q2.2 24.3 2.2 22.3 V4.0 Q2.2 2.0 4.2 2.0Z" stroke="#0d0d0d" stroke-width="2.2" fill="none" stroke-linejoin="round"/><path d="M13.2 2.0 V8.8 H19.8Z" fill="#0d0d0d" stroke="#0d0d0d" stroke-width="1" stroke-linejoin="round"/><rect x="5.5" y="13.4" width="11" height="2.5" fill="#0d0d0d"/><rect x="5.5" y="18.1" width="11" height="2.5" fill="#0d0d0d"/></svg>
<div class="t" style="left:137.00px;top:747.46px;font-size:16px;line-height:16px;color:#242424;font-weight:bold;letter-spacing:0px;">Article 126 written by Janine Doe</div>
<div class="t" style="left:589.00px;top:746.61px;font-size:17px;line-height:17px;color:#262626;font-weight:normal;letter-spacing:0px;">John Doe</div>
<div class="t" style="left:836.50px;top:746.61px;font-size:17px;line-height:17px;color:#262626;font-weight:normal;letter-spacing:0px;">2 months ago</div>
<div class="t" style="left:1083.50px;top:746.61px;font-size:17px;line-height:17px;color:#262626;font-weight:normal;letter-spacing:0px;">2 months ago</div>
<div class="t" style="left:1331.00px;top:746.61px;font-size:17px;line-height:17px;color:#262626;font-weight:normal;letter-spacing:0px;">Draft (v1)</div>
<svg class="r" style="left:1614.00px;top:743.50px;" width="5.4" height="5.4" viewBox="0 0 6 6"><circle cx="3" cy="3" r="2.7" fill="#777"/></svg>
<svg class="r" style="left:1614.00px;top:751.30px;" width="5.4" height="5.4" viewBox="0 0 6 6"><circle cx="3" cy="3" r="2.7" fill="#777"/></svg>
<svg class="r" style="left:1614.00px;top:759.00px;" width="5.4" height="5.4" viewBox="0 0 6 6"><circle cx="3" cy="3" r="2.7" fill="#777"/></svg>
<div class="r" style="left:-0.50px;top:786.40px;width:1665.50px;height:1.20px;background:#e2e2e2;"></div>
<div class="r" style="left:34.20px;top:808.60px;width:22.00px;height:22.30px;background:transparent;border:2.2px solid #757575;border-radius:2px;box-sizing:border-box;"></div>
<svg class="r" style="left:101.00px;top:806.50px;" width="23" height="26" viewBox="0 0 23 26"><path d="M4.2 2.0 H13.6 L19.8 8.4 V22.3 Q19.8 24.3 17.8 24.3 H4.2 Q2.2 24.3 2.2 22.3 V4.0 Q2.2 2.0 4.2 2.0Z" stroke="#0d0d0d" stroke-width="2.2" fill="none" stroke-linejoin="round"/><path d="M13.2 2.0 V8.8 H19.8Z" fill="#0d0d0d" stroke="#0d0d0d" stroke-width="1" stroke-linejoin="round"/><rect x="5.5" y="13.4" width="11" height="2.5" fill="#0d0d0d"/><rect x="5.5" y="18.1" width="11" height="2.5" fill="#0d0d0d"/></svg>
<div class="t" style="left:137.00px;top:813.06px;font-size:16px;line-height:16px;color:#242424;font-weight:bold;letter-spacing:0px;">Article 146 written by Jasmine Doe</div>
<div class="t" style="left:589.00px;top:812.21px;font-size:17px;line-height:17px;color:#262626;font-weight:normal;letter-spacing:0px;">John Doe</div>
<div class="t" style="left:836.50px;top:812.21px;font-size:17px;line-height:17px;color:#262626;font-weight:normal;letter-spacing:0px;">2 months ago</div>
<div class="t" style="left:1083.50px;top:812.21px;font-size:17px;line-height:17px;color:#262626;font-weight:normal;letter-spacing:0px;">2 months ago</div>
<div class="t" style="left:1331.00px;top:812.21px;font-size:17px;line-height:17px;color:#262626;font-weight:normal;letter-spacing:0px;">Draft (v1)</div>
<svg class="r" style="left:1614.00px;top:809.10px;" width="5.4" height="5.4" viewBox="0 0 6 6"><circle cx="3" cy="3" r="2.7" fill="#777"/></svg>
<svg class="r" style="left:1614.00px;top:816.90px;" width="5.4" height="5.4" viewBox="0 0 6 6"><circle cx="3" cy="3" r="2.7" fill="#777"/></svg>
<svg class="r" style="left:1614.00px;top:824.60px;" width="5.4" height="5.4" viewBox="0 0 6 6"><circle cx="3" cy="3" r="2.7" fill="#777"/></svg>
<div class="r" style="left:-0.50px;top:852.00px;width:1665.50px;height:1.20px;background:#e2e2e2;"></div>
<div class="r" style="left:34.20px;top:874.20px;width:22.00px;height:22.30px;background:transparent;border:2.2px solid #757575;border-radius:2px;box-sizing:border-box;"></div>
<svg class="r" style="left:101.00px;top:872.10px;" width="23" height="26" viewBox="0 0 23 26"><path d="M4.2 2.0 H13.6 L19.8 8.4 V22.3 Q19.8 24.3 17.8 24.3 H4.2 Q2.2 24.3 2.2 22.3 V4.0 Q2.2 2.0 4.2 2.0Z" stroke="#0d0d0d" stroke-width="2.2" fill="none" stroke-linejoin="round"/><path d="M13.2 2.0 V8.8 H19.8Z" fill="#0d0d0d" stroke="#0d0d0d" stroke-width="1" stroke-linejoin="round"/><rect x="5.5" y="13.4" width="11" height="2.5" fill="#0d0d0d"/><rect x="5.5" y="18.1" width="11" height="2.5" fill="#0d0d0d"/></svg>
<div class="t" style="left:137.00px;top:878.66px;font-size:16px;line-height:16px;color:#242424;font-weight:bold;letter-spacing:0px;">Article 152 written by Jared Doe</div>
<div class="t" style="left:589.00px;top:877.81px;font-size:17px;line-height:17px;color:#262626;font-weight:normal;letter-spacing:0px;">John Doe</div>
<div class="t" style="left:836.50px;top:877.81px;font-size:17px;line-height:17px;color:#262626;font-weight:normal;letter-spacing:0px;">2 months ago</div>
<div class="t" style="left:1083.50px;top:877.81px;font-size:17px;line-height:17px;color:#262626;font-weight:normal;letter-spacing:0px;">2 months ago</div>
<div class="t" style="left:1331.00px;top:877.81px;font-size:17px;line-height:17px;color:#262626;font-weight:normal;letter-spacing:0px;">Draft (v1)</div>
<svg class="r" style="left:1614.00px;top:874.70px;" width="5.4" height="5.4" viewBox="0 0 6 6"><circle cx="3" cy="3" r="2.7" fill="#777"/></svg>
<svg class="r" style="left:1614.00px;top:882.50px;" width="5.4" height="5.4" viewBox="0 0 6 6"><circle cx="3" cy="3" r="2.7" fill="#777"/></svg>
<svg class="r" style="left:1614.00px;top:890.20px;" width="5.4" height="5.4" viewBox="0 0 6 6"><circle cx="3" cy="3" r="2.7" fill="#777"/></svg>
<div class="r" style="left:-0.50px;top:917.60px;width:1665.50px;height:1.20px;background:#e2e2e2;"></div>
<div class="r" style="left:34.20px;top:939.80px;width:22.00px;height:22.30px;background:transparent;border:2.2px solid #757575;border-radius:2px;box-sizing:border-box;"></div>
<svg class="r" style="left:101.00px;top:937.70px;" width="23" height="26" viewBox="0 0 23 26"><path d="M4.2 2.0 H13.6 L19.8 8.4 V22.3 Q19.8 24.3 17.8 24.3 H4.2 Q2.2 24.3 2.2 22.3 V4.0 Q2.2 2.0 4.2 2.0Z" stroke="#0d0d0d" stroke-width="2.2" fill="none" stroke-linejoin="round"/><path d="M13.2 2.0 V8.8 H19.8Z" fill="#0d0d0d" stroke="#0d0d0d" stroke-width="1" stroke-linejoin="round"/><rect x="5.5" y="13.4" width="11" height="2.5" fill="#0d0d0d"/><rect x="5.5" y="18.1" width="11" height="2.5" fill="#0d0d0d"/></svg>
<div class="t" style="left:137.00px;top:944.26px;font-size:16px;line-height:16px;color:#242424;font-weight:bold;letter-spacing:0px;">Article 142 written by Jason Doe</div>
<div class="t" style="left:589.00px;top:943.41px;font-size:17px;line-height:17px;color:#262626;font-weight:normal;letter-spacing:0px;">John Doe</div>
<div class="t" style="left:836.50px;top:943.41px;font-size:17px;line-height:17px;color:#262626;font-weight:normal;letter-spacing:0px;">2 months ago</div>
<div class="t" style="left:1083.50px;top:943.41px;font-size:17px;line-height:17px;color:#262626;font-weight:normal;letter-spacing:0px;">2 months ago</div>
<div class="t" style="left:1331.00px;top:943.41px;font-size:17px;line-height:17px;color:#262626;font-weight:normal;letter-spacing:0px;">Draft (v1)</div>
<svg class="r" style="left:1614.00px;top:940.30px;" width="5.4" height="5.4" viewBox="0 0 6 6"><circle cx="3" cy="3" r="2.7" fill="#777"/></svg>
<svg class="r" style="left:1614.00px;top:948.10px;" width="5.4" height="5.4" viewBox="0 0 6 6"><circle cx="3" cy="3" r="2.7" fill="#777"/></svg>
<svg class="r" style="left:1614.00px;top:955.80px;" width="5.4" height="5.4" viewBox="0 0 6 6"><circle cx="3" cy="3" r="2.7" fill="#777"/></svg>
<div class="r" style="left:-0.50px;top:983.20px;width:1665.50px;height:1.20px;background:#e2e2e2;"></div>
<div class="r" style="left:34.20px;top:1005.40px;width:22.00px;height:22.30px;background:transparent;border:2.2px solid #757575;border-radius:2px;box-sizing:border-box;"></div>
<svg class="r" style="left:101.00px;top:1003.30px;" width="23" height="26" viewBox="0 0 23 26"><path d="M4.2 2.0 H13.6 L19.8 8.4 V22.3 Q19.8 24.3 17.8 24.3 H4.2 Q2.2 24.3 2.2 22.3 V4.0 Q2.2 2.0 4.2 2.0Z" stroke="#0d0d0d" stroke-width="2.2" fill="none" stroke-linejoin="round"/><path d="M13.2 2.0 V8.8 H19.8Z" fill="#0d0d0d" stroke="#0d0d0d" stroke-width="1" stroke-linejoin="round"/><rect x="5.5" y="13.4" width="11" height="2.5" fill="#0d0d0d"/><rect x="5.5" y="18.1" width="11" height="2.5" fill="#0d0d0d"/></svg>
<div class="t" style="left:137.00px;top:1009.86px;font-size:16px;line-height:16px;color:#242424;font-weight:bold;letter-spacing:0px;">Article 140 written by John Doe</div>
<div class="t" style="left:589.00px;top:1009.01px;font-size:17px;line-height:17px;color:#262626;font-weight:normal;letter-spacing:0px;">John Doe</div>
<div class="t" style="left:836.50px;top:1009.01px;font-size:17px;line-height:17px;color:#262626;font-weight:normal;letter-spacing:0px;">2 months ago</div>
<div class="t" style="left:1083.50px;top:1009.01px;font-size:17px;line-height:17px;color:#262626;font-weight:normal;letter-spacing:0px;">2 months ago</div>
<div class="t" style="left:1331.00px;top:1009.01px;font-size:17px;line-height:17px;color:#262626;font-weight:normal;letter-spacing:0px;">Draft (v1)</div>
<svg class="r" style="left:1614.00px;top:1005.90px;" width="5.4" height="5.4" viewBox="0 0 6 6"><circle cx="3" cy="3" r="2.7" fill="#777"/></svg>
<svg class="r" style="left:1614.00px;top:1013.70px;" width="5.4" height="5.4" viewBox="0 0 6 6"><circle cx="3" cy="3" r="2.7" fill="#777"/></svg>
<svg class="r" style="left:1614.00px;top:1021.40px;" width="5.4" height="5.4" viewBox="0 0 6 6"><circle cx="3" cy="3" r="2.7" fill="#777"/></svg>
<div class="r" style="left:-0.50px;top:1048.80px;width:1665.50px;height:1.20px;background:#e2e2e2;"></div>
</div>
<div class="r" style="left:335.00px;top:1245.00px;width:1665.00px;height:1.20px;background:#e3e3e3;"></div>
<div class="t" style="left:347.00px;top:1257.90px;font-size:15px;line-height:15px;color:#7a7a7a;font-weight:normal;letter-spacing:0px;">Showing 50 out of 999 entries.</div>
<svg class="r" style="left:943.50px;top:676.50px;" width="16" height="24" viewBox="0 0 16 24"><path d="M1.5 1.5 L1.5 18.5 L5.5 14.8 L8.5 21.5 L11.5 20.2 L8.6 13.6 L14 13.6Z" fill="#000" stroke="#fff" stroke-width="1.3" stroke-linejoin="round"/></svg>
<svg class="r" style="left:0.00px;top:1270.00px;" width="15" height="15" viewBox="0 0 15 15"><path d="M0 0 Q0 15 15 15 L0 15Z" fill="#000"/></svg>
<svg class="r" style="left:1986.00px;top:1278.50px;" width="14" height="6.5" viewBox="0 0 14 6.5"><path d="M14 0 Q11 6.5 1 6.5 L14 6.5Z" fill="#000"/></svg>
</div></body></html>
